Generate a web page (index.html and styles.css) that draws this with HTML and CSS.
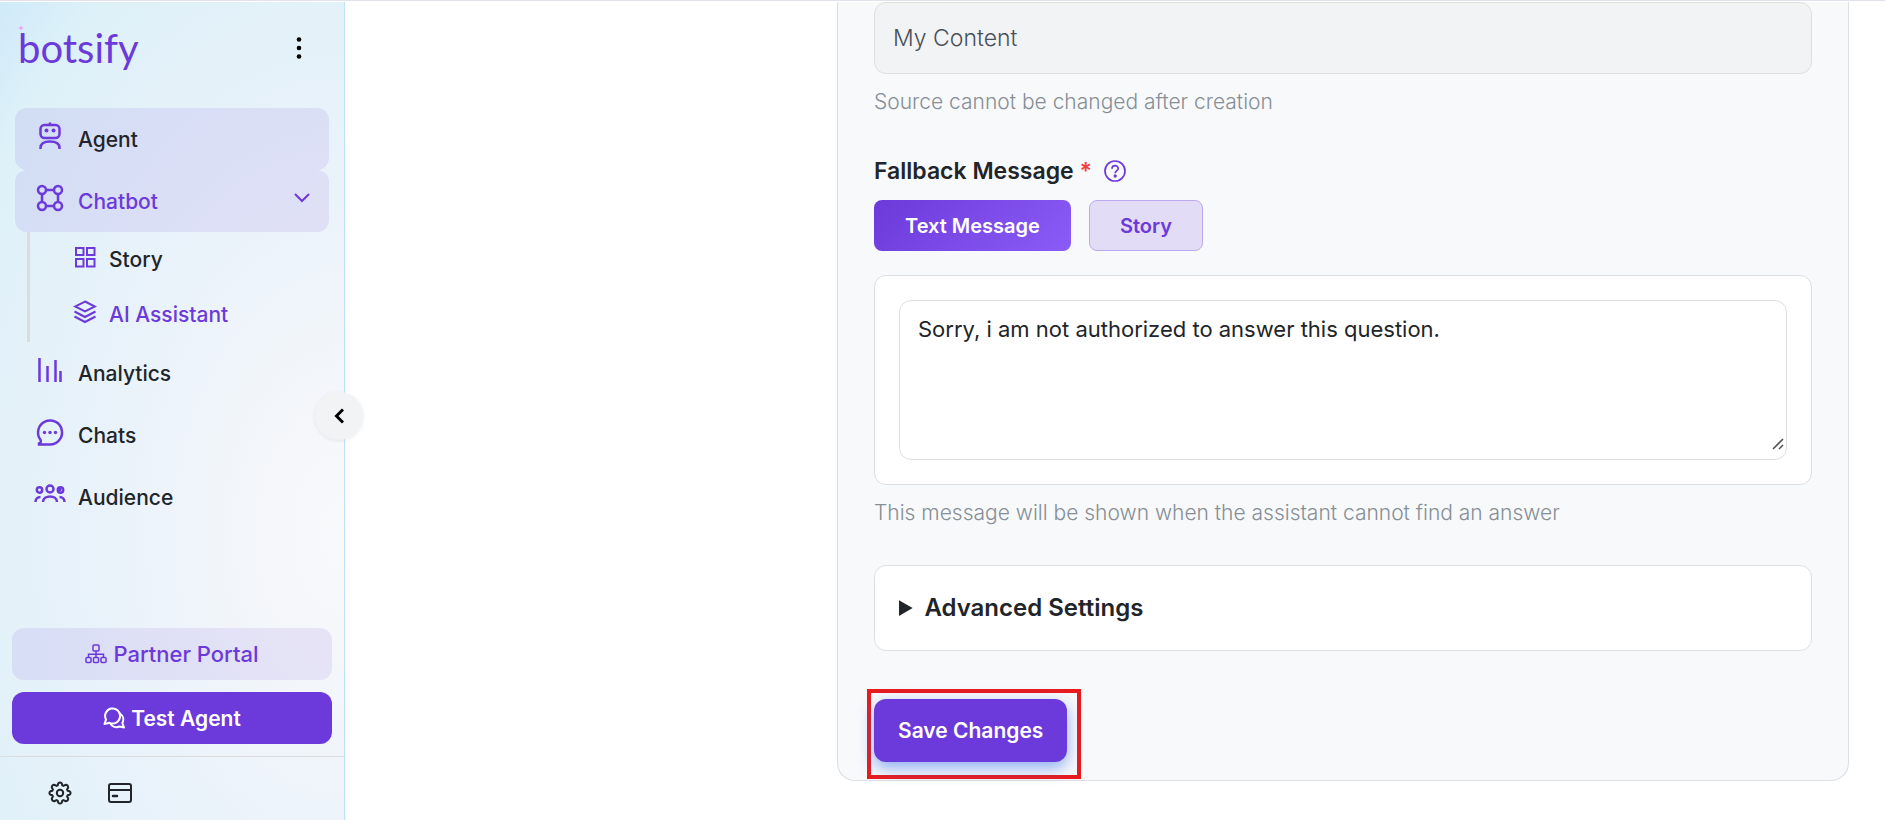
FILE: index.html
```
<!DOCTYPE html>
<html lang="en">
<head>
    <meta charset="UTF-8">
    <meta name="viewport" content="width=device-width, initial-scale=1.0">
    <title>Botsify - AI Assistant</title>
    <link rel="stylesheet" href="styles.css">
</head>
<body>
    <div class="app">
        <aside class="sidebar">
            <div class="sidebar-header">
                <a href="#" class="logo">botsify
                    <svg class="logo-spark" width="6" height="6" viewBox="0 0 8 8"><path d="M4 0L5 3L8 4L5 5L4 8L3 5L0 4L3 3Z" fill="#f29af0"/></svg>
                </a>
                <button class="icon-btn" aria-label="More">
                    <svg width="6" height="24" viewBox="0 0 6 24"><circle cx="3" cy="3.500" r="2.300"/><circle cx="3" cy="12" r="2.300"/><circle cx="3" cy="20.500" r="2.300"/></svg>
                </button>
            </div>

            <nav class="menu">
                <a href="#" class="menu-item selected">
                    <svg class="icon" width="32" height="32" viewBox="0 0 32 32"><rect x="6.500" y="5" width="19" height="13" rx="4"/><path d="M16 2.500V5M6.500 29V28C6.500 24 10 21.500 16 21.500S25.500 24 25.500 28V29"/><circle class="dot" cx="12.500" cy="10.500" r="2"/><circle class="dot" cx="19.500" cy="10.500" r="2"/></svg>
                    Agent
                </a>
                <a href="#" class="menu-item selected active">
                    <svg class="icon" width="32" height="32" viewBox="0 0 32 32"><circle cx="8" cy="8" r="4"/><circle cx="24" cy="8" r="4"/><circle cx="8" cy="24" r="4"/><circle cx="24" cy="24" r="4"/><path d="M12 8H20M12 24H20M8 12V20M24 12V20"/></svg>
                    Chatbot
                    <svg class="icon chevron" width="16" height="16" viewBox="0 0 16 16"><path d="M1 4L8 11L15 4"/></svg>
                </a>
                <div class="submenu">
                    <a href="#" class="submenu-item">
                        <svg class="icon thin" width="24" height="24" viewBox="0 0 24 24"><path d="M3 3H10.500V10H3ZM14 3H21.500V10H14ZM3 14H10.500V21.500H3ZM14 14H21.500V21.500H14Z"/></svg>
                        Story
                    </a>
                    <a href="#" class="submenu-item active">
                        <svg class="icon thin" width="24" height="24" viewBox="0 0 24 24"><path d="M12 1.500L22 6.500L12 11.500L2 6.500ZM1.500 11.500L12 17L22.500 11.500M1.500 16.500L12 22L22.500 16.500"/></svg>
                        AI Assistant
                    </a>
                </div>
                <a href="#" class="menu-item">
                    <svg class="icon" width="32" height="32" viewBox="0 0 32 32"><path d="M5.500 4V28M13.500 12V28M21.500 6V28M26.500 17V28"/></svg>
                    Analytics
                </a>
                <a href="#" class="menu-item">
                    <svg class="icon" width="32" height="32" viewBox="0 0 32 32"><path d="M5 28.500H16A12 12 0 1 0 6.500 23.800C7.500 25.500 6.500 27 5 27.500Z"/><circle class="dot" cx="10.500" cy="16.500" r="1.700"/><circle class="dot" cx="16" cy="16.500" r="1.700"/><circle class="dot" cx="21.500" cy="16.500" r="1.700"/></svg>
                    Chats
                </a>
                <a href="#" class="menu-item">
                    <svg class="icon" width="32" height="32" viewBox="0 0 32 32"><circle cx="16" cy="11" r="3.500"/><circle cx="5.500" cy="12" r="2.700"/><circle cx="26.500" cy="12" r="2.700"/><circle class="dot" cx="25.500" cy="11.500" r="2"/><path d="M9 24C9 16.500 23 16.500 23 24M1.500 24C1.500 21 3.500 19 6.500 19M30.500 24C30.500 21 28.500 19 25.500 19"/></svg>
                    Audience
                </a>
            </nav>

            <div class="sidebar-actions">
                <button class="btn-side btn-soft">
                    <svg width="22" height="20" viewBox="0 0 22 20" fill="none" stroke="currentColor" stroke-width="1.500"><rect x="8" y="1" width="6" height="6" rx="1"/><rect x="1" y="13.500" width="5" height="5" rx="1"/><rect x="8.500" y="13.500" width="5" height="5" rx="1"/><rect x="16" y="13.500" width="5" height="5" rx="1"/><path d="M11 7V13.500M3.500 13.500V10.300H18.500V13.500"/></svg>
                    Partner Portal
                </button>
                <button class="btn-side btn-solid">
                    <svg width="22" height="22" viewBox="0 0 22 22" fill="none" stroke="currentColor" stroke-width="2" stroke-linejoin="round"><path d="M1.500 17L3 12.500A7.500 7.500 0 1 1 6.500 15.800Z"/><path d="M17 6.500C20.500 9 21 13 19.300 16L21 20.500L16.500 19.500C13 21 9 20 7 16"/></svg>
                    Test Agent
                </button>
            </div>

            <div class="sidebar-footer">
                <button class="icon-btn" aria-label="Settings">
                    <svg width="24" height="24" viewBox="0 0 24 24" fill="none" stroke="#212529" stroke-width="2" stroke-linejoin="round"><circle cx="12" cy="12" r="3.200"/><path d="M10.200 2.400Q12 .4 13.800 2.400L14.300 4.400L15.500 4.900L17.400 3.800Q20.200 3.700 20.200 6.500L19.100 8.500L19.600 9.700L21.600 10.200Q23.600 12 21.600 13.800L19.600 14.300L19.100 15.500L20.200 17.500Q20.300 20.200 17.400 20.200L15.500 19.100L14.300 19.600L13.800 21.600Q12 23.600 10.200 21.600L9.700 19.600L8.500 19.100L6.600 20.200Q3.800 20.300 3.800 17.500L4.900 15.500L4.400 14.300L2.400 13.800Q.4 12 2.400 10.200L4.400 9.700L4.900 8.500L3.800 6.500Q3.700 3.700 6.600 3.800L8.500 4.900L9.700 4.400Z"/></svg>
                </button>
                <button class="icon-btn" aria-label="Billing">
                    <svg width="24" height="24" viewBox="0 0 24 24" fill="none" stroke="#212529" stroke-width="2"><rect x="1" y="3" width="22" height="18" rx="2"/><path d="M1 9H23"/><path d="M5 15H9" stroke-width="2.500" stroke-linecap="round"/></svg>
                </button>
            </div>

            <button class="collapse-btn" aria-label="Collapse sidebar">
                <svg width="10" height="16" viewBox="0 0 10 16" fill="none" stroke="#000" stroke-width="3"><path d="M9 1.500L2.500 8L9 14.500"/></svg>
            </button>
        </aside>

        <main class="content">
            <form class="card">
                <input class="source" type="text" value="My Content" aria-label="Source" disabled>
                <p class="hint">Source cannot be changed after creation</p>

                <div class="field-label">
                    <label for="fallback">Fallback Message <span class="required">*</span></label>
                    <svg width="22" height="22" viewBox="0 0 22 22" fill="none" stroke="#6c39da" stroke-width="1.700"><circle cx="11" cy="11" r="10"/><path d="M8 8.800C8 4.600 14.200 4.800 14.200 8.500C14.200 10.700 11.200 10.700 11.200 13.200"/><circle cx="11.200" cy="16" r=".8" fill="#6c39da"/></svg>
                </div>
                <div class="tabs">
                    <button type="button" class="tab tab-active">Text Message</button>
                    <button type="button" class="tab">Story</button>
                </div>

                <div class="panel message">
                    <textarea id="fallback">Sorry, i am not authorized to answer this question.</textarea>
                    <svg class="grip" width="12" height="12" viewBox="0 0 12 12" stroke="#555" stroke-width="1.600"><path d="M1 11L11 1M7 11L11 7"/></svg>
                </div>
                <p class="hint">This message will be shown when the assistant cannot find an answer</p>

                <details class="panel advanced">
                    <summary>Advanced Settings</summary>
                </details>

                <div class="highlight">
                    <button type="button" class="btn-save">Save Changes</button>
                </div>
            </form>
        </main>
    </div>
</body>
</html>
```
FILE: styles.css
```
* {
    box-sizing: border-box;
}
body {
    margin: 0;
    font-family: Inter, "Open Sans", sans-serif;
    font-size: 21px;
    color: #212529;
    background: #fff;
    border-top: 1px solid #e1e1ef;
}
button, input, textarea {
    font-family: inherit;
    font-size: inherit;
}
button {
    cursor: pointer;
}
a {
    color: inherit;
    text-decoration: none;
}
.app {
    display: flex;
    min-height: calc(100vh - 1px);
    padding-top: 1px;
}

/* sidebar */
.sidebar {
    position: relative;
    display: flex;
    flex-direction: column;
    flex: 0 0 345px;
    border-right: 1px solid #bfe4fa;
    background: radial-gradient(ellipse at 100% 65%, #f8f9fb 0%, #f5f7fa 15%, #eef4fa 35%, #e8f2fa 55%, #e2f1f9 75%, #ddf1f8 86%, #d0eafa 100%);
}
.sidebar-header {
    display: flex;
    align-items: center;
    justify-content: space-between;
    height: 91px;
    padding: 0 42px 0 18px;
}
.logo {
    position: relative;
    font-family: Lato, sans-serif;
    font-size: 40px;
    line-height: 48px;
    color: #6c39da;
}
.logo-spark {
    position: absolute;
    left: 0;
    top: 1px;
}
.icon-btn {
    display: flex;
    padding: 0;
    border: 0;
    background: none;
}
.menu {
    padding: 15px 15px 0;
    font-weight: 500;
}
.menu-item {
    display: flex;
    align-items: center;
    gap: 12px;
    height: 62px;
    padding: 0 19px;
    border-radius: 12px;
}
.menu-item.selected {
    background: rgba(108, 57, 218, 0.1);
}
.active {
    color: #6c39da;
}
.icon {
    flex: none;
    margin-bottom: 6px;
    fill: none;
    stroke: #6c39da;
    stroke-width: 2.5;
}
.icon .dot {
    fill: #6c39da;
    stroke: none;
}
.icon.thin {
    stroke-width: 2;
}
.chevron {
    margin-left: auto;
    stroke-width: 2;
}
.submenu {
    margin-left: 12px;
    border-left: 3px solid #dcdcdf;
}
.submenu-item {
    display: flex;
    align-items: center;
    gap: 12px;
    height: 55px;
    padding-left: 43px;
}
.sidebar-actions {
    display: flex;
    flex-direction: column;
    gap: 12px;
    margin-top: auto;
    padding: 12px;
}
.btn-side {
    display: flex;
    align-items: center;
    justify-content: center;
    gap: 6px;
    height: 52px;
    border: 0;
    border-radius: 12px;
}
.btn-soft {
    font-size: 22px;
    font-weight: 500;
    color: #6c39da;
    background: rgba(108, 57, 218, 0.1);
}
.btn-solid {
    font-weight: 600;
    color: #fff;
    background: #6c39da;
}
.sidebar-footer {
    display: flex;
    align-items: center;
    gap: 36px;
    height: 64px;
    padding: 8px 48px 0;
    border-top: 1px solid #dcdcdf;
}
.collapse-btn {
    position: absolute;
    top: 390px;
    right: -19px;
    display: flex;
    align-items: center;
    justify-content: center;
    width: 48px;
    height: 48px;
    border: 0;
    border-radius: 50%;
    background: #f1f3f5;
    box-shadow: 0 1px 4px rgba(0, 0, 0, 0.08);
}

/* form */
.content {
    flex: 1;
    min-width: 0;
    padding: 0 36px 39px;
}
.card {
    max-width: 1012px;
    margin-left: auto;
    padding: 0 36px;
    border: 1px solid #dedfe1;
    border-top: 0;
    border-radius: 0 0 18px 18px;
    background: #f8f9fb;
}
.source {
    display: block;
    width: 100%;
    height: 72px;
    padding: 0 18px;
    border: 1px solid #dedfe1;
    border-radius: 12px;
    font-size: 23px;
    font-weight: 300;
    color: #495057;
    background: #f1f3f5;
}
.hint {
    margin: 12px 0 0;
    font-weight: 300;
    line-height: 32px;
    color: #868e96;
}
.field-label {
    display: flex;
    align-items: center;
    gap: 12px;
    margin: 36px 0 12px;
    font-size: 23px;
    font-weight: 600;
    line-height: 34px;
}
.required {
    color: #f03e3e;
}
.tabs {
    display: flex;
    gap: 18px;
    margin-bottom: 24px;
}
.tab {
    height: 51px;
    padding: 0 30px;
    border: 1px solid #bda9ef;
    border-radius: 8px;
    font-size: 20px;
    font-weight: 600;
    color: #6c39da;
    background: #e3dcf6;
}
.tab-active {
    border-color: transparent;
    color: #fff;
    background: linear-gradient(135deg, #6c39da, #8b5cf6) border-box;
}
.panel {
    padding: 24px;
    border: 1px solid #dedfe1;
    border-radius: 12px;
    background: #fff;
}
.message {
    position: relative;
}
.message textarea {
    display: block;
    width: 100%;
    height: 160px;
    padding: 12px 18px;
    border: 1px solid #dedfe1;
    border-radius: 12px;
    font-size: 22px;
    line-height: 32px;
    color: #212529;
    resize: none;
}
.grip {
    position: absolute;
    right: 27px;
    bottom: 34px;
}
.advanced {
    margin-top: 36px;
}
.advanced summary {
    font-size: 24px;
    font-weight: 600;
    line-height: 36px;
}
.highlight {
    width: fit-content;
    margin: 38px 0 1px -7px;
    padding: 6px 10px 13px 3px;
    border: 4px solid #e81c1e;
}
.btn-save {
    display: block;
    height: 63px;
    padding: 0 24px;
    border: 0;
    border-radius: 12px;
    font-weight: 600;
    color: #fff;
    background: #6c39da;
    box-shadow: 0 6px 16px rgba(37, 99, 235, 0.5);
}
```
